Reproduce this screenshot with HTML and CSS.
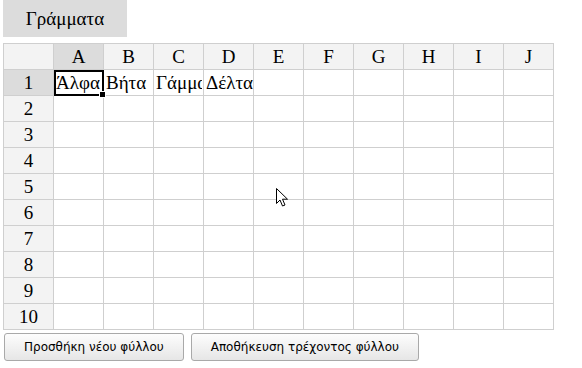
FILE: index.html
```html
<!DOCTYPE html>
<html lang="el">
<head>
<meta charset="UTF-8">
<title>Φύλλα</title>
<link rel="stylesheet" href="styles.css">
</head>
<body>

<div class="tabs">
  <div class="tab active">Γράμματα</div>
</div>

<table class="sheet">
  <tr>
    <th class="corner"></th>
    <th class="sel">A</th><th>B</th><th>C</th><th>D</th><th>E</th>
    <th>F</th><th>G</th><th>H</th><th>I</th><th>J</th>
  </tr>
  <tr>
    <th class="sel">1</th>
    <td class="current"><div class="cell">Άλφα</div><span class="handle"></span></td>
    <td><div class="cell">Βήτα</div></td>
    <td><div class="cell">Γάμμα</div></td>
    <td><div class="cell spill">Δέλτα</div></td>
    <td></td><td></td><td></td><td></td><td></td><td></td>
  </tr>
  <tr><th>2</th><td></td><td></td><td></td><td></td><td></td><td></td><td></td><td></td><td></td><td></td></tr>
  <tr><th>3</th><td></td><td></td><td></td><td></td><td></td><td></td><td></td><td></td><td></td><td></td></tr>
  <tr><th>4</th><td></td><td></td><td></td><td></td><td></td><td></td><td></td><td></td><td></td><td></td></tr>
  <tr><th>5</th><td></td><td></td><td></td><td></td><td></td><td></td><td></td><td></td><td></td><td></td></tr>
  <tr><th>6</th><td></td><td></td><td></td><td></td><td></td><td></td><td></td><td></td><td></td><td></td></tr>
  <tr><th>7</th><td></td><td></td><td></td><td></td><td></td><td></td><td></td><td></td><td></td><td></td></tr>
  <tr><th>8</th><td></td><td></td><td></td><td></td><td></td><td></td><td></td><td></td><td></td><td></td></tr>
  <tr><th>9</th><td></td><td></td><td></td><td></td><td></td><td></td><td></td><td></td><td></td><td></td></tr>
  <tr><th>10</th><td></td><td></td><td></td><td></td><td></td><td></td><td></td><td></td><td></td><td></td></tr>
</table>

<div class="actions">
  <button type="button" class="btn">Προσθήκη νέου φύλλου</button>
  <button type="button" class="btn">Αποθήκευση τρέχοντος φύλλου</button>
</div>

<svg class="pointer" width="13" height="20" viewBox="0 0 13 20">
  <path d="M0.5 0.5 L0.5 15.5 L4 12 L6.5 18 L9 17 L6.5 11.2 L11.5 11.2 Z" fill="#fff" stroke="#000" stroke-width="1" stroke-linejoin="miter"/>
</svg>

</body>
</html>
```

FILE: styles.css
```css
body {
  margin: 0;
  padding: 0 0 0 3px;
  background-color: #fff;
  font-family: "Liberation Serif", "DejaVu Serif", serif;
  color: #000;
  position: relative;
}
.tabs {
  display: flex;
  height: 37px;
  margin-bottom: 6px;
}
.tab {
  width: 124px;
  background-color: #dcdcdc;
  font-size: 19px;
  display: flex;
  align-items: center;
  justify-content: center;
}
.sheet {
  border-collapse: collapse;
  table-layout: fixed;
  font-size: 19px;
}
.sheet th,
.sheet td {
  padding: 0;
  border: 1px solid #cfcfcf;
  box-sizing: border-box;
}
.sheet tr > * {
  width: 50px;
  height: 26px;
}
.sheet th {
  background-color: #f3f3f3;
  font-weight: normal;
  text-align: center;
}
.sheet th.sel {
  background-color: #dcdcdc;
}
.sheet td {
  position: relative;
  vertical-align: middle;
}
.cell {
  width: 48px;
  padding-left: 2px;
  white-space: nowrap;
  overflow: hidden;
  line-height: 24px;
  box-sizing: border-box;
}
.cell.spill {
  overflow: visible;
  position: relative;
  z-index: 1;
}
.sheet td.current {
  outline: 2px solid #000;
  outline-offset: -2px;
}
.handle {
  position: absolute;
  right: -3px;
  bottom: -3px;
  width: 5px;
  height: 5px;
  background-color: #000;
  border: 1px solid #fff;
  z-index: 2;
}
.actions {
  display: flex;
  gap: 7px;
  margin-top: 3px;
  padding-left: 1px;
}
.btn {
  height: 28px;
  padding: 0 19px;
  font-family: "DejaVu Sans", Verdana, sans-serif;
  font-size: 12px;
  color: #000;
  background: linear-gradient(#fdfdfd, #e6e6e6);
  border: 1px solid #a9a9a9;
  border-radius: 3px;
}
.pointer {
  position: absolute;
  left: 276px;
  top: 188px;
}
```
